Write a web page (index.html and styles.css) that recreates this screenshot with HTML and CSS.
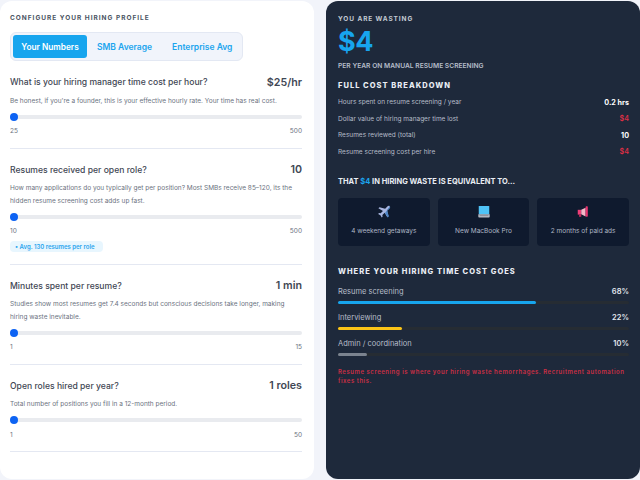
FILE: index.html
```html
<!DOCTYPE html>
<html lang="en">
<head>
<meta charset="utf-8">
<title>Hiring cost calculator</title>
<link rel="stylesheet" href="styles.css">
</head>
<body>
<div class="page">
  <section class="panel config">
    <h2 class="config-title">CONFIGURE YOUR HIRING PROFILE</h2>
    <div class="tabs">
      <span class="tab active">Your Numbers</span>
      <span class="tab">SMB Average</span>
      <span class="tab last">Enterprise Avg</span>
    </div>
    <div class="field">
      <div class="field-head"><span class="q">What is your hiring manager time cost per hour?</span><span class="val">$25/hr</span></div>
      <p class="desc">Be honest, if you're a founder, this is your effective hourly rate. Your time has real cost.</p>
      <div class="track"><span class="thumb"></span></div>
      <div class="range"><span>25</span><span>500</span></div>
    </div>
    <div class="field">
      <div class="field-head"><span class="q">Resumes received per open role?</span><span class="val">10</span></div>
      <p class="desc">How many applications do you typically get per position? Most SMBs receive 85–120, its the hidden resume screening cost adds up fast.</p>
      <div class="track"><span class="thumb"></span></div>
      <div class="range"><span>10</span><span>500</span></div>
      <span class="pill">• Avg. 130 resumes per role</span>
    </div>
    <div class="field">
      <div class="field-head"><span class="q">Minutes spent per resume?</span><span class="val">1 min</span></div>
      <p class="desc">Studies show most resumes get 7.4 seconds but conscious decisions take longer, making hiring waste inevitable.</p>
      <div class="track"><span class="thumb"></span></div>
      <div class="range"><span>1</span><span>15</span></div>
    </div>
    <div class="field">
      <div class="field-head"><span class="q">Open roles hired per year?</span><span class="val">1 roles</span></div>
      <p class="desc">Total number of positions you fill in a 12-month period.</p>
      <div class="track"><span class="thumb"></span></div>
      <div class="range"><span>1</span><span>50</span></div>
    </div>
  </section>
  <section class="panel result">
    <div class="eyebrow">YOU ARE WASTING</div>
    <div class="big">$4</div>
    <div class="per">PER YEAR ON MANUAL RESUME SCREENING</div>
    <h3 class="sec-title breakdown">FULL COST BREAKDOWN</h3>
    <div class="row"><span>Hours spent on resume screening / year</span><b>0.2 hrs</b></div>
    <div class="row"><span>Dollar value of hiring manager time lost</span><b class="red">$4</b></div>
    <div class="row"><span>Resumes reviewed (total)</span><b>10</b></div>
    <div class="row"><span>Resume screening cost per hire</span><b class="red">$4</b></div>
    <h3 class="equiv">THAT <em>$4</em> IN HIRING WASTE IS EQUIVALENT TO...</h3>
    <div class="cards">
      <div class="card">
        <svg class="ico" viewBox="0 0 16 16"><path fill="#a9b6e0" d="M14.6 1.4c-.8-.8-2-.5-2.8.3L9.3 4.2 2.9 2.5 1.6 3.8l5.2 3-2.6 2.7-1.9-.3-1 1 2.6 1.5 1.500 2.600 1-1-.3-1.900 2.700-2.600 3 5.200 1.300-1.300-1.700-6.400 2.500-2.500c.8-.8 1.100-2 .3-2.800z"/><path fill="#4f86c6" d="M14.600 1.400c.8.8.5 2-.3 2.800l-2.500 2.500 1.700 6.400-1.300 1.300-3-5.200z"/></svg>
        <span>4 weekend getaways</span>
      </div>
      <div class="card">
        <svg class="ico" viewBox="0 0 16 16"><rect x="2" y="1" width="12" height="9.500" rx=".6" fill="#4fc3f7"/><path fill="#b8bcc6" d="M1.500 10.500h13v2.900a.9.9 0 0 1-.9.9H2.400a.9.9 0 0 1-.9-.9z"/><rect x="3" y="11.500" width="10" height="1.200" fill="#8b909c"/></svg>
        <span>New MacBook Pro</span>
      </div>
      <div class="card">
        <svg class="ico" viewBox="0 0 16 16"><rect x="2" y="5.500" width="4" height="5.500" fill="#ef3f78"/><path fill="#f4b8c8" d="M6 5.500 11 3v10l-5-2.500z"/><rect x="11" y="1.500" width="2.500" height="12" rx=".8" fill="#e8336f"/><rect x="3.500" y="11" width="2.500" height="2.500" fill="#c2285a"/></svg>
        <span>2 months of paid ads</span>
      </div>
    </div>
    <h3 class="sec-title where">WHERE YOUR HIRING TIME COST GOES</h3>
    <div class="bar-head"><span>Resume screening</span><b>68%</b></div>
    <div class="bar"><span class="fill blue" style="width:68%"></span></div>
    <div class="bar-head"><span>Interviewing</span><b>22%</b></div>
    <div class="bar"><span class="fill yellow" style="width:22%"></span></div>
    <div class="bar-head"><span>Admin / coordination</span><b>10%</b></div>
    <div class="bar"><span class="fill gray" style="width:10%"></span></div>
    <p class="note">Resume screening is where your hiring waste hemorrhages. Recruitment automation fixes this.</p>
  </section>
</div>
</body>
</html>
```

FILE: styles.css
```css
* { box-sizing: border-box; }
html, body { margin: 0; height: 100%; }
body {
  background: #f2f4fa;
  font-family: Inter, "Open Sans", sans-serif;
  overflow: hidden;
}
.page {
  display: flex;
  gap: 12px;
  height: 478px;
  margin-top: 1px;
}
.panel { flex: 0 0 314px; border-radius: 12px; }
.config { background: #fff; padding: 12px 12px 0 10px; }
.config-title {
  margin: 0;
  font-size: 6.500px;
  line-height: 11px;
  font-weight: 700;
  letter-spacing: 1px;
  color: #4b5563;
}
.tabs {
  display: flex;
  width: 233px;
  height: 29px;
  margin-top: 8px;
  padding: 3px;
  background: #f1f4fb;
  border: 1px solid #e3e8f3;
  border-radius: 6px;
  font-size: 8.500px;
  font-weight: 600;
  color: #1ba5ee;
}
.tab { flex: none; display: flex; align-items: center; justify-content: center; padding: 0 7px; white-space: nowrap; margin-right: 1px; }
.tab.active { width: 74px; height: 23px; margin: -1px 3px 0 -1px; background: #17a5ee; color: #fff; border-radius: 3px; font-size: 8.300px; }
.tab.last { margin-left: 5px; }
.field { border-bottom: 1px solid #e4e8f2; padding: 14.500px 0 11.500px; width: 292px; }
.field-head { display: flex; justify-content: space-between; align-items: center; height: 13px; }
.q { font-size: 8.600px; font-weight: 500; color: #3f4754; }
.val { font-size: 10.700px; font-weight: 600; color: #3f4754; }
.desc { margin: 6px 0 0; font-size: 6.500px; line-height: 12.500px; color: #6b7280; }
.track { position: relative; height: 4px; margin-top: 7.500px; background: #e9ebef; border-radius: 2px; }
.thumb { position: absolute; left: 0; top: -2px; width: 8px; height: 8px; background: #0d63f3; border-radius: 50%; }
.range { display: flex; justify-content: space-between; margin-top: 7.500px; font-size: 6.500px; line-height: 10px; color: #6b7280; }
.pill {
  display: block;
  width: 93px;
  height: 11px;
  margin-top: 5px;
  padding-left: 5px;
  background: #e8f6fe;
  border-radius: 4px;
  font-size: 6px;
  line-height: 11px;
  font-weight: 600;
  color: #2aa5ee;
  white-space: nowrap;
}
.result { background: #1e293b; padding: 13px 11px 0 12px; color: #fff; }
.eyebrow { font-size: 6.500px; line-height: 10px; font-weight: 700; letter-spacing: .9px; color: #c3c9d3; }
.big { margin-top: 2px; font-size: 27px; line-height: 32px; font-weight: 700; letter-spacing: -.5px; color: #17a5ee; }
.per { margin-top: 3px; font-size: 6.700px; line-height: 10px; font-weight: 600; color: #b6bdc9; white-space: nowrap; }
.sec-title { margin: 0; font-size: 7.500px; line-height: 12px; font-weight: 800; letter-spacing: 1.030px; color: #e9edf3; white-space: nowrap; }
.breakdown { margin-top: 9px; margin-bottom: 2px; }
.row { display: flex; justify-content: space-between; align-items: center; height: 16.500px; font-size: 6.500px; color: #b6bdc9; }
.row b { font-size: 7.200px; font-weight: 700; color: #fff; }
.row b.red { color: #dc2f45; font-weight: 600; }
.equiv { margin: 16px 0 0; font-size: 7.500px; line-height: 12px; font-weight: 700; color: #e9edf3; }
.equiv em { font-style: normal; color: #1ba5ee; }
.cards { display: flex; gap: 8px; margin-top: 10px; }
.card {
  flex: 1;
  height: 48px;
  display: flex;
  flex-direction: column;
  align-items: center;
  padding-top: 7px;
  background: #0f1a2e;
  border-radius: 4px;
  font-size: 6.500px;
  color: #aeb6c4;
  white-space: nowrap;
}
.ico { width: 14px; height: 14px; margin-bottom: 8px; }
.where { margin-top: 20px; margin-bottom: 7px; }
.bar-head { display: flex; justify-content: space-between; align-items: center; height: 12px; font-size: 7.500px; color: #b6bdc9; }
.bar-head b { font-weight: 600; color: #e3e7ef; }
.bar { height: 3px; margin: 4px 0 7px; background: #262c33; border-radius: 2px; }
.fill { display: block; height: 100%; border-radius: 2px; }
.blue { background: #17a5ee; }
.yellow { background: #fbc417; }
.gray { background: #7b838f; }
.note { margin: 10.500px 0 0; font-size: 6px; line-height: 9.500px; font-weight: 600; letter-spacing: .53px; color: #c92f45; }
```
